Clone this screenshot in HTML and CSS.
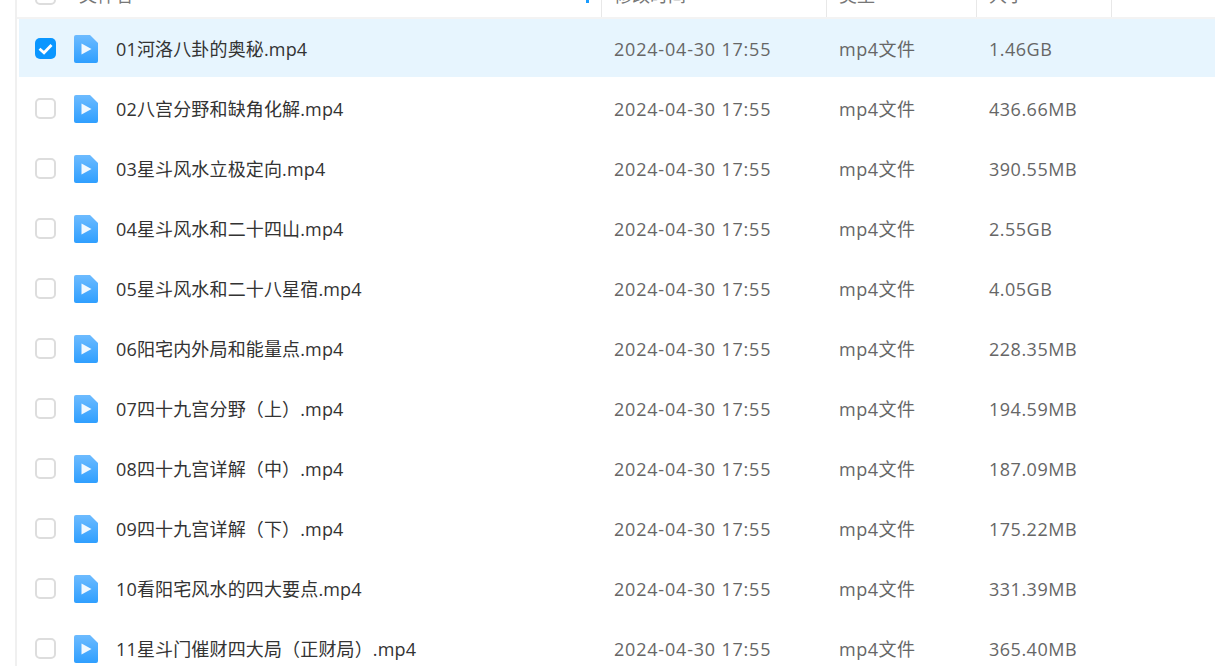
FILE: index.html

```html
<!DOCTYPE html>
<html lang="zh-CN">
<head>
  <meta charset="UTF-8" />
  <title>文件列表</title>
  <link rel="stylesheet" href="styles.css">
</head>
<body>
  <svg class="defs" width="0" height="0">
    <defs>
      <linearGradient id="fileBlue" x1="0" y1="0" x2="0" y2="1">
        <stop offset="0" stop-color="#6dbbff" />
        <stop offset="1" stop-color="#2f9fff" />
      </linearGradient>
      <symbol id="video-file" viewBox="0 0 24 28">
        <path d="M2 0H16L24 8V26a2 2 0 0 1-2 2H2a2 2 0 0 1-2-2V2a2 2 0 0 1 2-2Z" fill="url(#fileBlue)" />
        <path d="M7.5 8.5L17.5 14L7.5 19.5Z" fill="#fff" opacity="0.92" />
      </symbol>
    </defs>
  </svg>

  <div class="panel">
    <div class="table-head">
      <div class="cell name-cell">
        <span class="check"></span>
        <span class="head-name">文件名</span>
        <span class="sort-dot"></span>
      </div>
      <div class="cell">修改时间</div>
      <div class="cell">类型</div>
      <div class="cell">大小<span class="size-mark">·</span></div>
    </div>

    <div class="row selected">
      <div class="name-cell">
        <span class="check">
          <svg viewBox="0 0 21 21" width="21" height="21"><path d="M4.5 10.8L9 14.8L16.5 7" fill="none" stroke="#fff" stroke-width="2.8" /></svg>
        </span>
        <svg class="file-icon"><use href="#video-file" /></svg>
        <span class="file-name">01河洛八卦的奥秘.mp4</span>
      </div>
      <div class="meta date">2024-04-30 17:55</div>
      <div class="meta type">mp4文件</div>
      <div class="meta size">1.46GB</div>
    </div>
    <div class="row">
      <div class="name-cell"><span class="check"></span><svg class="file-icon"><use href="#video-file" /></svg><span class="file-name">02八宫分野和缺角化解.mp4</span></div>
      <div class="meta date">2024-04-30 17:55</div>
      <div class="meta type">mp4文件</div>
      <div class="meta size">436.66MB</div>
    </div>
    <div class="row">
      <div class="name-cell"><span class="check"></span><svg class="file-icon"><use href="#video-file" /></svg><span class="file-name">03星斗风水立极定向.mp4</span></div>
      <div class="meta date">2024-04-30 17:55</div>
      <div class="meta type">mp4文件</div>
      <div class="meta size">390.55MB</div>
    </div>
    <div class="row">
      <div class="name-cell"><span class="check"></span><svg class="file-icon"><use href="#video-file" /></svg><span class="file-name">04星斗风水和二十四山.mp4</span></div>
      <div class="meta date">2024-04-30 17:55</div>
      <div class="meta type">mp4文件</div>
      <div class="meta size">2.55GB</div>
    </div>
    <div class="row">
      <div class="name-cell"><span class="check"></span><svg class="file-icon"><use href="#video-file" /></svg><span class="file-name">05星斗风水和二十八星宿.mp4</span></div>
      <div class="meta date">2024-04-30 17:55</div>
      <div class="meta type">mp4文件</div>
      <div class="meta size">4.05GB</div>
    </div>
    <div class="row">
      <div class="name-cell"><span class="check"></span><svg class="file-icon"><use href="#video-file" /></svg><span class="file-name">06阳宅内外局和能量点.mp4</span></div>
      <div class="meta date">2024-04-30 17:55</div>
      <div class="meta type">mp4文件</div>
      <div class="meta size">228.35MB</div>
    </div>
    <div class="row">
      <div class="name-cell"><span class="check"></span><svg class="file-icon"><use href="#video-file" /></svg><span class="file-name">07四十九宫分野（上）.mp4</span></div>
      <div class="meta date">2024-04-30 17:55</div>
      <div class="meta type">mp4文件</div>
      <div class="meta size">194.59MB</div>
    </div>
    <div class="row">
      <div class="name-cell"><span class="check"></span><svg class="file-icon"><use href="#video-file" /></svg><span class="file-name">08四十九宫详解（中）.mp4</span></div>
      <div class="meta date">2024-04-30 17:55</div>
      <div class="meta type">mp4文件</div>
      <div class="meta size">187.09MB</div>
    </div>
    <div class="row">
      <div class="name-cell"><span class="check"></span><svg class="file-icon"><use href="#video-file" /></svg><span class="file-name">09四十九宫详解（下）.mp4</span></div>
      <div class="meta date">2024-04-30 17:55</div>
      <div class="meta type">mp4文件</div>
      <div class="meta size">175.22MB</div>
    </div>
    <div class="row">
      <div class="name-cell"><span class="check"></span><svg class="file-icon"><use href="#video-file" /></svg><span class="file-name">10看阳宅风水的四大要点.mp4</span></div>
      <div class="meta date">2024-04-30 17:55</div>
      <div class="meta type">mp4文件</div>
      <div class="meta size">331.39MB</div>
    </div>
    <div class="row">
      <div class="name-cell"><span class="check"></span><svg class="file-icon"><use href="#video-file" /></svg><span class="file-name">11星斗门催财四大局（正财局）.mp4</span></div>
      <div class="meta date">2024-04-30 17:55</div>
      <div class="meta type">mp4文件</div>
      <div class="meta size">365.40MB</div>
    </div>
  </div>
</body>
</html>
```

FILE: styles.css

```css
* {
  box-sizing: border-box;
}

html, body {
  margin: 0;
  padding: 0;
  height: 100%;
  overflow: hidden;
  background: #fff;
  font-family: 'Open Sans', 'Noto Sans CJK SC', sans-serif;
  font-size: 18px;
}

.defs {
  display: block;
  height: 0;
}

.panel {
  margin-left: 15px;
  margin-top: -30px;
  height: 720px;
  padding-left: 2px;
  border-left: 2px solid #f0f0f0;
  overflow: hidden;
}

.table-head,
.row {
  display: grid;
  grid-template-columns: 583px 225px 150px 135px;
  align-items: center;
}

.table-head {
  height: 49px;
  margin-left: -2px;
  padding-left: 2px;
  border-bottom: 2px solid #f3f3f3;
  color: #777;
}

.table-head .cell {
  height: 100%;
  display: flex;
  align-items: center;
  padding-left: 12px;
  padding-top: 1px;
  border-right: 1px solid #e8e8e8;
}

.table-head .name-cell {
  position: relative;
  padding-left: 16px;
}

.head-name {
  margin-left: 23px;
}

.sort-dot {
  position: absolute;
  right: 12px;
  top: 22px;
  width: 3px;
  height: 11px;
  background: #1a9cff;
}

.size-mark {
  color: #999;
}

.row {
  height: 58px;
  margin-bottom: 2px;
}

.row.selected {
  background: #e7f5fe;
}

.name-cell {
  display: flex;
  align-items: center;
  padding-left: 16px;
}

.check {
  flex: none;
  width: 21px;
  height: 21px;
  border: 2px solid #dddddd;
  border-radius: 5px;
  background: #fff;
}

.selected .check {
  border: none;
  background: #0a96ff;
}

.check svg {
  display: block;
}

.file-icon {
  flex: none;
  width: 24px;
  height: 28px;
  margin-top: 2px;
  margin-left: 18px;
}

.file-name {
  margin-left: 18px;
  color: #333;
  letter-spacing: 0.15px;
  white-space: nowrap;
}

.meta {
  padding-left: 12px;
  color: #666;
  white-space: nowrap;
}

.date {
  padding-top: 2px;
  letter-spacing: 0.8px;
}

.type {
  letter-spacing: 0.5px;
}

.size {
  padding-top: 2px;
  letter-spacing: 0.5px;
}
```
